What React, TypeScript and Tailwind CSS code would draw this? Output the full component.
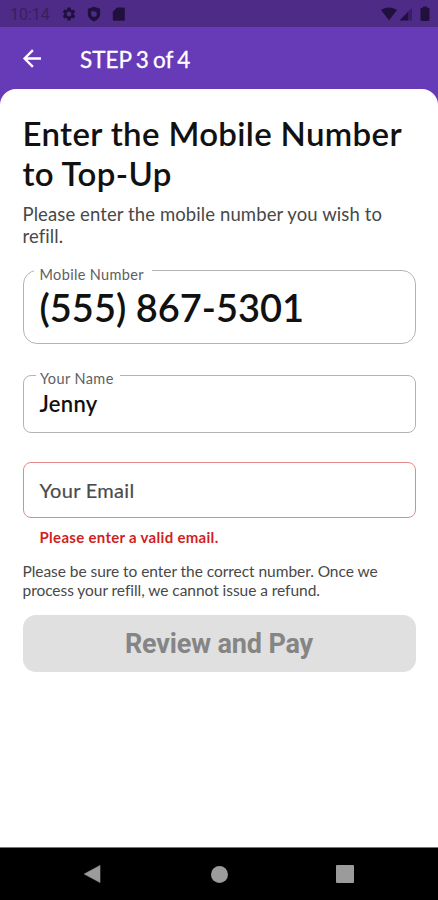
import React from "react";
import { MdSettings } from "react-icons/md";

interface OutlinedFieldProps {
  label: string;
  value: string;
  boxClass: string;
  legendClass: string;
  valueClass: string;
}

const OutlinedField: React.FC<OutlinedFieldProps> = ({ label, value, boxClass, legendClass, valueClass }) => (
  <fieldset className={`min-w-0 border border-[#b4b4b4] ${boxClass}`}>
    <legend className={`h-4 whitespace-nowrap text-[14.5px] text-[#606060] ${legendClass}`}>
      {label}
    </legend>
    <div className={`whitespace-nowrap pl-4 text-[#111111] ${valueClass}`}>{value}</div>
  </fieldset>
);

const StatusBar: React.FC = () => (
  <div className="flex h-[27px] items-center bg-[#4e2b87] pl-[10px] pr-2 pt-[1px] text-[#21103d]">
    <span className="w-[51px] pt-[1px] font-[Roboto] text-[16px] leading-none text-[#38205f]">10:14</span>
    <MdSettings className="h-4 w-4" />
    <svg className="ml-[9px] h-4 w-4" viewBox="0 0 16 16" fill="currentColor">
      <path
        fillRule="evenodd"
        d="M8 .7 14.2 2.8v4.7c0 3.9-2.4 6.4-6.2 8-3.8-1.6-6.2-4.1-6.2-8V2.8L8 .7ZM5.2 5v3.2a2.8 2.8 0 1 0 2.8-3H5.2Z"
      />
    </svg>
    <svg className="ml-[9px] h-4 w-4" viewBox="0 0 16 16" fill="currentColor">
      <path d="M6 1.500h6.800a1 1 0 0 1 1 1v11.200a1 1 0 0 1-1 1H2.800a1 1 0 0 1-1-1V5.700L6 1.500Z" />
    </svg>
    <svg className="ml-auto h-[14px] w-4" viewBox="0 0 16 14" fill="currentColor">
      <path d="M0 3C4.8-.5 11.2-.5 16 3L8 13.300 0 3Z" />
    </svg>
    <svg className="ml-[2px] h-[14px] w-[14px]" viewBox="0 0 14 14" fill="currentColor">
      <path d="M.5 13.500 9 4.800v8.700H.5Z" />
      <path d="M9 4.800 13 1v12.500H9Z" opacity=".45" />
    </svg>
    <svg className="ml-[7px] h-4 w-[10px]" viewBox="0 0 10 16" fill="currentColor">
      <path d="M3 .5h4v1.300h1c.9 0 1.500.6 1.500 1.400v10.400c0 .9-.6 1.500-1.500 1.500H2c-.9 0-1.500-.6-1.500-1.500V3.200c0-.8.6-1.400 1.500-1.400h1V.5Z" />
    </svg>
  </div>
);

const NavigationBar: React.FC = () => (
  <div className="flex h-[53px] items-center justify-between border-t border-[#777777] bg-black pl-[83px] pr-[84px] text-[#9b9b9b]">
    <svg className="h-[18px] w-[18px]" viewBox="0 0 18 18" fill="currentColor">
      <path d="M17 .5v17L1.200 9 17 .5Z" stroke="currentColor" strokeWidth=".6" strokeLinejoin="round" />
    </svg>
    <div className="ml-[1px] h-[17px] w-[17px] rounded-full bg-[#9b9b9b]" />
    <div className="h-[18px] w-[18px] rounded-[1px] bg-[#9b9b9b]" />
  </div>
);

const App: React.FC = () => {
  return (
    <div className="flex h-[900px] w-[438px] flex-col overflow-hidden bg-[#673ab7] font-[Lato,sans-serif]">
      <StatusBar />
      <header className="flex h-[62px] shrink-0 items-center pl-5 pt-[2px] text-white">
        <svg className="h-6 w-6" viewBox="0 0 24 24" fill="none" stroke="currentColor" strokeWidth="2.4">
          <path d="M21 11.500H4.800M12.900 3.200 4.600 11.500l8.300 8.300" />
        </svg>
        <h1 className="ml-9 whitespace-nowrap pt-[3px] text-[22.5px] leading-none [word-spacing:-1.5px] [-webkit-text-stroke:0.3px]">
          STEP 3 of 4
        </h1>
      </header>

      <main className="flex-1 rounded-t-[16px] bg-white px-[22.5px] pt-6">
        <h2 className="whitespace-nowrap text-[33px] font-semibold leading-[40px] tracking-[0.35px] text-[#111111]">
          Enter the Mobile Number
          <br />
          to Top-Up
        </h2>
        <p className="mt-[10px] whitespace-nowrap text-[18.5px] leading-[22px] tracking-[0.1px] text-[#484848]">
          Please enter the mobile number you wish to
          <br />
          refill.
        </p>

        <OutlinedField
          label="Mobile Number"
          value="(555) 867-5301"
          boxClass="mt-[15px] h-[82px] rounded-[14px]"
          legendClass="ml-[10px] w-[118px] pl-[6px] leading-[25px] tracking-[0.35px]"
          valueClass="pt-[7px] text-[38px] font-semibold leading-[44px]"
        />
        <OutlinedField
          label="Your Name"
          value="Jenny"
          boxClass="mt-[23px] h-[66px] rounded-[8px]"
          legendClass="ml-[12px] w-[84px] pl-[4.5px] leading-[24px] tracking-[0.4px]"
          valueClass="pt-[8px] text-[22px] font-semibold leading-[26px] tracking-[0.3px]"
        />

        <div className="mt-[29px] flex h-[56px] items-center rounded-[8px] border border-[#e08a8a] pl-4 text-[20px] tracking-[0.3px] text-[#4b4b4b] [-webkit-text-stroke:0.2px]">
          Your Email
        </div>
        <p className="mt-[9px] whitespace-nowrap pl-[17px] text-[15px] font-bold leading-[20px] tracking-[0.3px] text-[#d01f1f]">
          Please enter a valid email.
        </p>

        <p className="mt-[15px] whitespace-nowrap text-[15.5px] leading-[19px] tracking-[-0.05px] text-[#484848]">
          Please be sure to enter the correct number. Once we
          <br />
          process your refill, we cannot issue a refund.
        </p>
        <button
          disabled
          className="mt-[15px] block h-[57px] w-full rounded-[13px] bg-[#e0e0e0] pt-[2px] font-[Roboto] text-[27px] font-bold leading-none tracking-[-0.15px] text-[#858585]"
        >
          Review and Pay
        </button>
      </main>

      <NavigationBar />
    </div>
  );
};

export default App;
